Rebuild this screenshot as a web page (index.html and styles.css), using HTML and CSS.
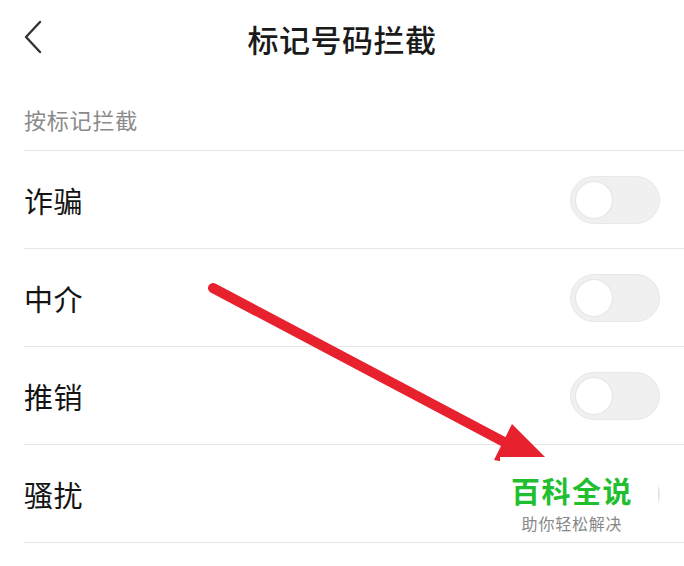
FILE: index.html
```html
<!DOCTYPE html>
<html lang="zh-CN">
	<head>
		<meta charset="UTF-8" />
		<meta name="viewport" content="width=device-width, initial-scale=1.0" />
		<title>标记号码拦截</title>
		<link rel="stylesheet" href="styles.css">
	</head>
	<body>
		<header class="top-bar">
			<span class="back-btn">
				<svg width="22" height="34" viewBox="0 0 22 34">
					<polyline points="18,2 4,17 18,32" fill="none" stroke="#333" stroke-width="2.4" stroke-linecap="round" stroke-linejoin="round" />
				</svg>
			</span>
			<h1 class="title">标记号码拦截</h1>
		</header>

		<div class="section-label">按标记拦截</div>

		<ul class="mark-list">
			<li class="mark-row">
				<span class="mark-name">诈骗</span>
				<span class="switch"><span class="knob"></span></span>
			</li>
			<li class="mark-row">
				<span class="mark-name">中介</span>
				<span class="switch"><span class="knob"></span></span>
			</li>
			<li class="mark-row">
				<span class="mark-name">推销</span>
				<span class="switch"><span class="knob"></span></span>
			</li>
			<li class="mark-row">
				<span class="mark-name">骚扰</span>
				<span class="switch switch-on"><span class="knob"></span></span>
			</li>
		</ul>

		<!-- annotation arrow drawn over the list -->
		<svg class="arrow" width="684" height="566" viewBox="0 0 684 566">
			<line x1="213" y1="288" x2="525" y2="453" stroke="#e8212e" stroke-width="10" stroke-linecap="round" />
			<polygon points="512,424 560,472 494,460" fill="#e8212e" />
		</svg>

		<div class="watermark">
			<div class="wm-title">百科全说</div>
			<div class="wm-sub">助你轻松解决</div>
		</div>
	</body>
</html>
```

FILE: styles.css
```css
body {
	margin: 0;
	background-color: #fff;
	font-family: "Noto Sans CJK SC", "Noto Sans", sans-serif;
	color: #111;
	position: relative;
	width: 684px;
	height: 566px;
	overflow: hidden;
}

.top-bar {
	height: 76px;
	display: flex;
	align-items: center;
	justify-content: center;
	position: relative;
}

.back-btn {
	position: absolute;
	left: 22px;
	top: 20px;
}

.title {
	margin: 0;
	font-size: 31px;
	font-weight: 500;
	color: #1a1a1a;
	letter-spacing: 0.5px;
}

.section-label {
	height: 75px;
	box-sizing: border-box;
	padding-top: 26px;
	margin-left: 24px;
	font-size: 22px;
	letter-spacing: 0.8px;
	color: #8a8a8a;
	line-height: 34px;
	border-bottom: 1px solid #e6e6e6;
}

.mark-list {
	list-style: none;
	margin: 0 0 0 24px;
	padding: 0;
}

.mark-row {
	height: 98px;
	box-sizing: border-box;
	border-bottom: 1px solid #e6e6e6;
	display: flex;
	align-items: center;
	justify-content: space-between;
	padding-right: 24px;
}

.mark-name {
	font-size: 29px;
	color: #141414;
	letter-spacing: 0.5px;
}

.switch {
	width: 90px;
	height: 48px;
	border-radius: 24px;
	background-color: #f0f0f0;
	border: 1px solid #e8e8e8;
	box-sizing: border-box;
	display: flex;
	align-items: center;
	padding-left: 5px;
}

.switch-on {
	background-color: #d9e7f5;
}

.knob {
	width: 36px;
	height: 36px;
	border-radius: 50%;
	background-color: #fff;
	box-shadow: 0 0 2px rgba(0, 0, 0, 0.15);
}

.arrow {
	position: absolute;
	left: 0;
	top: 0;
	pointer-events: none;
}

.watermark {
	position: absolute;
	left: 500px;
	top: 457px;
	width: 158px;
	height: 83px;
	box-sizing: border-box;
	padding-right: 14px;
	background-color: #fff;
	text-align: center;
}

.wm-title {
	margin-top: 16px;
	font-size: 29px;
	font-weight: 700;
	color: #1fbf2f;
	line-height: 34px;
	letter-spacing: 1.5px;
}

.wm-sub {
	margin-top: 5px;
	font-size: 16px;
	color: #888;
	line-height: 22px;
	letter-spacing: 0.8px;
}
```
